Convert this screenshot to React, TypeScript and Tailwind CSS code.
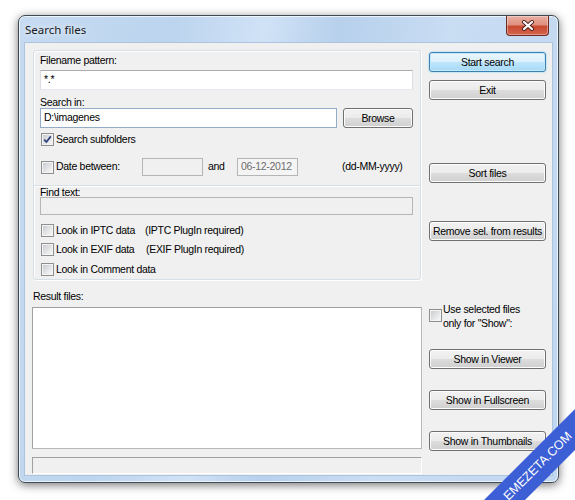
import React from "react";

const btn =
  "h-[20px] w-[117px] rounded-[3px] border border-[#707070] bg-[linear-gradient(to_bottom,#f2f2f2_0%,#ebebeb_50%,#dddddd_51%,#cfcfcf_100%)] shadow-[inset_0_0_0_1px_#fcfcfc] text-black flex items-center justify-center leading-none whitespace-nowrap";

const btnDefault =
  "h-[20px] w-[117px] rounded-[3px] border border-[#3c7fb1] bg-[linear-gradient(to_bottom,#eaf6fd_0%,#d9f0fc_50%,#bee6fd_51%,#a7d9f5_100%)] shadow-[inset_0_0_0_1px_#c4e8fb,0_0_2px_#66c8f5] text-black flex items-center justify-center leading-none whitespace-nowrap";

function Check({ checked = false }: { checked?: boolean }) {
  return (
    <span className="w-[13px] h-[13px] shrink-0 border border-[#8e8f8f] bg-[#f4f4f4] p-[1px] flex">
      <span className="flex-1 bg-[linear-gradient(135deg,#c9ccd1_0%,#e6e7e9_60%,#f6f6f6_100%)] flex items-center justify-center">
        {checked && (
          <svg width="9" height="9" viewBox="0 0 9 9">
            <path d="M1.2 4.6 L3.4 7 L7.8 1.4" fill="none" stroke="#2a3f7c" strokeWidth="1.7" />
          </svg>
        )}
      </span>
    </span>
  );
}

function TextBox({ value = "", className = "", disabled = false }: { value?: string; className?: string; disabled?: boolean }) {
  return (
    <div
      className={
        "h-[20px] border flex items-center px-[3px] whitespace-nowrap overflow-hidden " +
        (disabled
          ? "bg-[#f4f4f4] border-[#b5b5b5] text-[#6d6d6d] "
          : "bg-white border-[#abadb3] border-l-[#dadde3] border-r-[#dadde3] border-b-[#e3e9ef] text-black ") +
        className
      }
    >
      {value}
    </div>
  );
}

export default function App() {
  return (
    <div className="relative w-[575px] h-[500px] overflow-hidden bg-white pl-[18px] pt-[15px] font-['Liberation_Sans',Arial,sans-serif] text-[10.5px] tracking-[-0.3px] text-black">
      {/* window */}
      <div className="w-[541px] rounded-[7px] border border-[#3e4a56] bg-[linear-gradient(100deg,#c6dbf2_0%,#bcd4ee_25%,#d0e2f6_40%,#b7d0ec_52%,#c9ddf3_70%,#c0d7f0_100%)] shadow-[0_2px_10px_rgba(0,0,0,0.55),inset_0_0_0_1px_rgba(255,255,255,0.7)] pb-[6px]">
        <div className="h-[26px] flex items-start justify-between">
          <span className="ml-[6px] mt-[5px] font-['Noto_Sans',sans-serif] text-[11.5px] tracking-normal text-[#1b1b1b] [text-shadow:0_0_6px_#ffffff]">
            Search files
          </span>
          <div className="mr-[9px] w-[43px] h-[20px] rounded-b-[4px] border border-t-0 border-[#6b2a22] bg-[linear-gradient(to_bottom,#eab0a3_0%,#e0907e_45%,#c84a33_55%,#d4644b_100%)] shadow-[inset_0_0_0_1px_rgba(255,255,255,0.35)] flex items-center justify-center">
            <svg width="14" height="11" viewBox="0 0 14 11">
              <path d="M3 2 L11 9 M11 2 L3 9" stroke="#4a1f18" strokeWidth="4" strokeLinecap="round" />
              <path d="M3 2 L11 9 M11 2 L3 9" stroke="#ffffff" strokeWidth="2.2" strokeLinecap="round" />
            </svg>
          </div>
        </div>

        {/* client */}
        <div className="mx-[5px] h-[434px] bg-[#f0f0f0] border border-[#aec4de] flex pl-[7px]">
          {/* left column */}
          <div className="w-[390px] flex flex-col">
            <div className="ml-[1px] mt-[7px] w-[388px] h-[230px] rounded-[3px] border border-[#d5dfe5] shadow-[inset_1px_1px_0_#ffffff,1px_1px_0_#ffffff] pl-[6px] flex flex-col">
              <div className="mt-[3px] h-[12px] leading-[12px]">Filename pattern:</div>
              <TextBox value="*.*" className="mt-[4px] w-[373px]" />
              <div className="mt-[6px] h-[12px] leading-[12px]">Search in:</div>
              <div className="flex items-center">
                <TextBox value="D:\imagenes" className="w-[297px] !border-[#94abc9]" />
                <button className={btn + " !w-[70px] ml-[6px]"}>Browse</button>
              </div>
              <div className="mt-[5px] h-[13px] flex items-center pl-[1px]">
                <Check checked />
                <span className="ml-[2px]">Search subfolders</span>
              </div>
              <div className="mt-[12px] h-[18px] flex items-center pl-[1px] whitespace-nowrap">
                <Check />
                <span className="ml-[2px] w-[86px]">Date between:</span>
                <TextBox disabled className="!h-[18px] w-[61px] !bg-[#f0f0f0]" />
                <span className="ml-[5px] w-[29px]">and</span>
                <TextBox disabled value="06-12-2012" className="!h-[18px] w-[61px]" />
                <span className="ml-[44px]">(dd-MM-yyyy)</span>
              </div>
              <div className="-ml-[6px] mt-[9px] h-[2px] border-t border-[#d5dfe5] border-b border-b-white" />
              <div className="h-[10px] leading-[10px]">Find text:</div>
              <TextBox disabled className="!h-[18px] w-[373px] !bg-[#f0f0f0]" />
              <div className="mt-[9px] h-[13px] flex items-center pl-[1px] whitespace-nowrap">
                <Check />
                <span className="ml-[2px] w-[89px]">Look in IPTC data</span>
                <span>(IPTC PlugIn required)</span>
              </div>
              <div className="mt-[6px] h-[13px] flex items-center pl-[1px] whitespace-nowrap">
                <Check />
                <span className="ml-[2px] w-[90px]">Look in EXIF data</span>
                <span>(EXIF PlugIn required)</span>
              </div>
              <div className="mt-[7px] h-[13px] flex items-center pl-[1px]">
                <Check />
                <span className="ml-[2px]">Look in Comment data</span>
              </div>
            </div>

            <div className="mt-[10px] ml-[1px] h-[12px] leading-[12px]">Result files:</div>
            <div className="mt-[5px] h-[142px] bg-white border border-[#a0a0a0] border-b-[#b8b8b8] border-r-[#b8b8b8]" />
            <div className="mt-[8px] h-[17px] bg-[#f0f0f0] border border-[#a0a0a0] border-b-white border-r-white" />
          </div>

          {/* right column */}
          <div className="ml-[7px] w-[117px] flex flex-col">
            <button className={btnDefault + " mt-[9px]"}>Start search</button>
            <button className={btn + " mt-[8px]"}>Exit</button>
            <button className={btn + " mt-[63px]"}>Sort files</button>
            <button className={btn + " mt-[38px]"}>Remove sel. from results</button>
            <div className="mt-[61px] flex items-start">
              <span className="mt-[7px]">
                <Check />
              </span>
              <span className="ml-[1px] leading-[14px] whitespace-nowrap">
                Use selected files
                <br />
                only for "Show":
              </span>
            </div>
            <button className={btn + " mt-[19px]"}>Show in Viewer</button>
            <button className={btn + " mt-[21px]"}>Show in Fullscreen</button>
            <button className={btn + " mt-[21px]"}>Show in Thumbnails</button>
          </div>
        </div>
      </div>

      {/* corner ribbon */}
      <div className="absolute left-[456px] top-[452px] w-[164px] h-[29px] bg-[#3d5fd6] -rotate-45 flex items-center justify-center text-white text-[12.5px] tracking-[0px] font-['Liberation_Sans',Arial,sans-serif]">
        EMEZETA.COM
      </div>
    </div>
  );
}
